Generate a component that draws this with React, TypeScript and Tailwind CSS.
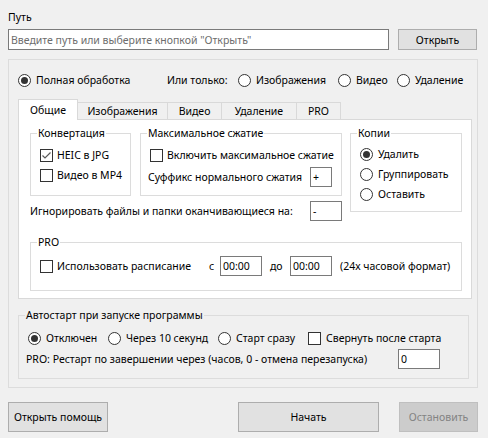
import React from "react";

function Radio({ checked = false }: { checked?: boolean }) {
  return (
    <svg width="13" height="13" viewBox="0 0 13 13" className="shrink-0">
      <circle cx="6.5" cy="6.5" r="6" fill="#ffffff" stroke="#333333" strokeWidth="1" />
      {checked && <circle cx="6.5" cy="6.5" r="3.5" fill="#333333" />}
    </svg>
  );
}

function Check({ checked = false }: { checked?: boolean }) {
  return (
    <svg width="13" height="13" viewBox="0 0 13 13" className="shrink-0">
      <rect x="0.5" y="0.5" width="12" height="12" fill="#ffffff" stroke="#333333" strokeWidth="1" />
      {checked && (
        <polyline points="2.5,6.5 5,9 10.5,3.5" fill="none" stroke="#5a5a5a" strokeWidth="1.2" />
      )}
    </svg>
  );
}

function Field({ w, value, h = "h-[20px]" }: { w: string; value: string; h?: string }) {
  return (
    <div className={`${w} ${h} shrink-0 bg-white border border-[#7a7a7a] px-[2px] flex items-center`}>
      {value}
    </div>
  );
}

function Group({
  title,
  className,
  children,
}: {
  title: string;
  className: string;
  children: React.ReactNode;
}) {
  return (
    <fieldset className={`border border-[#dcdcdc] ${className}`}>
      <legend className="ml-[6px] px-[1px] leading-[16px]">{title}</legend>
      {children}
    </fieldset>
  );
}

export default function App() {
  const tabs = [
    { label: "Изображения", w: "w-[90px]" },
    { label: "Видео", w: "w-[54px]" },
    { label: "Удаление", w: "w-[75px]" },
    { label: "PRO", w: "w-[44px]" },
  ];

  return (
    <div className="w-[488px] h-[438px] bg-[#f0f0f0] px-2 pt-[9px] text-[10.5px] leading-[16px] text-black whitespace-nowrap font-['Noto_Sans','Open_Sans',sans-serif]">
      <div className="h-[16px]">Путь</div>

      <div className="flex mt-[4px]">
        <div className="w-[381px] h-[21px] bg-white border border-[#7a7a7a] px-[2px] flex items-center text-[#6d6d6d]">
          Введите путь или выберите кнопкой "Открыть"
        </div>
        <button className="ml-[9px] w-[79px] h-[21px] bg-[#e1e1e1] border border-[#adadad] flex items-center justify-center">
          Открыть
        </button>
      </div>

      <div className="mt-[9px] w-[470px] h-[329px] border border-[#dcdcdc] pl-[9px]">
        <div className="flex items-center h-[16px] mt-[12px]">
          <div className="w-[149px] flex items-center gap-[5px]">
            <Radio checked />
            <span>Полная обработка</span>
          </div>
          <div className="w-[71px]">Или только:</div>
          <div className="w-[100px] flex items-center gap-[5px]">
            <Radio />
            <span>Изображения</span>
          </div>
          <div className="w-[59px] flex items-center gap-[5px]">
            <Radio />
            <span>Видео</span>
          </div>
          <div className="flex items-center gap-[5px]">
            <Radio />
            <span>Удаление</span>
          </div>
        </div>

        <div className="mt-[11px] flex items-end h-[20px]">
          <div className="w-[60px] h-[21px] -mb-px relative z-10 bg-white border border-b-0 border-[#d9d9d9] flex items-center justify-center">
            Общие
          </div>
          {tabs.map((t) => (
            <div
              key={t.label}
              className={`${t.w} h-[17px] border-t border-r border-[#d9d9d9] flex items-center justify-center`}
            >
              {t.label}
            </div>
          ))}
        </div>

        <div className="w-[454px] h-[180px] bg-white border border-[#d9d9d9]">
          <div className="flex">
            <div className="ml-[11px] w-[312px]">
              <div className="flex mt-[5px]">
                <Group title="Конвертация" className="w-[101px] h-[71px]">
                  <div className="pl-[9px] mt-[6px] flex flex-col gap-[4px]">
                    <div className="flex items-center h-[16px] gap-[4px]">
                      <Check checked />
                      <span>HEIC в JPG</span>
                    </div>
                    <div className="flex items-center h-[16px] gap-[4px]">
                      <Check />
                      <span>Видео в MP4</span>
                    </div>
                  </div>
                </Group>
                <Group title="Максимальное сжатие" className="ml-[9px] w-[202px] h-[71px]">
                  <div className="pl-[9px] mt-[6px] flex items-center h-[16px] gap-[4px]">
                    <Check />
                    <span>Включить максимальное сжатие</span>
                  </div>
                  <div className="pl-[7px] pr-[9px] mt-[4px] flex items-center justify-between h-[20px]">
                    <span>Суффикс нормального сжатия</span>
                    <Field w="w-[22px]" value="+" />
                  </div>
                </Group>
              </div>
              <div className="mt-[5px] flex items-center justify-between h-[20px]">
                <span>Игнорировать файлы и папки оканчивающиеся на:</span>
                <Field w="w-[32px]" value="-" />
              </div>
            </div>
            <Group title="Копии" className="ml-[8px] mt-[5px] w-[112px] h-[87px]">
              <div className="pl-[9px] mt-[5px] flex flex-col gap-[4px]">
                {["Удалить", "Группировать", "Оставить"].map((r, i) => (
                  <div key={r} className="flex items-center h-[16px] gap-[5px]">
                    <Radio checked={i === 0} />
                    <span>{r}</span>
                  </div>
                ))}
              </div>
            </Group>
          </div>

          <Group title="PRO" className="ml-[11px] mt-[13px] w-[432px] h-[57px]">
            <div className="pl-[9px] mt-[6px] flex items-center h-[20px]">
              <div className="w-[169px] flex items-center gap-[4px]">
                <Check />
                <span>Использовать расписание</span>
              </div>
              <div className="w-[11px]">с</div>
              <Field w="w-[42px]" value="00:00" />
              <div className="w-[28px] pl-[8px]">до</div>
              <Field w="w-[42px]" value="00:00" />
              <div className="ml-[8px]">(24х часовой формат)</div>
            </div>
          </Group>
        </div>

        <Group title="Автостарт при запуске программы" className="mt-[8px] w-[451px] h-[72px]">
          <div className="pl-[9px] mt-[7px] flex items-center h-[16px]">
            <div className="w-[80px] flex items-center gap-[5px]">
              <Radio checked />
              <span>Отключен</span>
            </div>
            <div className="w-[110px] flex items-center gap-[5px]">
              <Radio />
              <span>Через 10 секунд</span>
            </div>
            <div className="w-[90px] flex items-center gap-[5px]">
              <Radio />
              <span>Старт сразу</span>
            </div>
            <div className="flex items-center gap-[5px]">
              <Check />
              <span>Свернуть после старта</span>
            </div>
          </div>
          <div className="pl-[7px] mt-[3px] flex items-center h-[20px]">
            <div className="w-[372px]">PRO: Рестарт по завершении через (часов, 0 - отмена перезапуска)</div>
            <Field w="w-[42px]" value="0" />
          </div>
        </Group>
      </div>

      <div className="mt-[14px] flex">
        <button className="w-[100px] h-[30px] bg-[#e1e1e1] border border-[#adadad]">Открыть помощь</button>
        <button className="ml-[130px] w-[141px] h-[30px] bg-[#e1e1e1] border border-[#adadad]">Начать</button>
        <button className="ml-[20px] w-[79px] h-[30px] bg-[#cccccc] border border-[#bfbfbf] text-[#838383]">
          Остановить
        </button>
      </div>
    </div>
  );
}
